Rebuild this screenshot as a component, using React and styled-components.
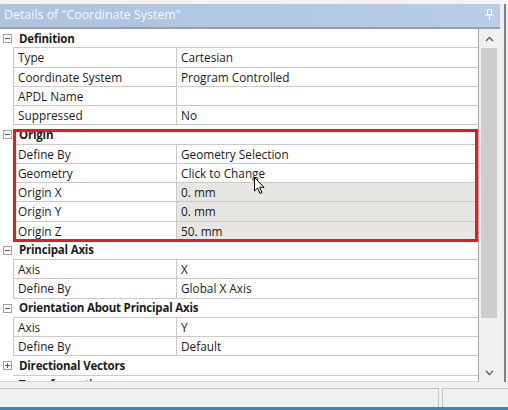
import React from "react";
import styled, { createGlobalStyle } from "styled-components";

const Global = createGlobalStyle`
  html, body { margin: 0; padding: 0; background: #f0f0f0; }
  body { font-family: "Open Sans", "Noto Sans", sans-serif; }
  * { box-sizing: border-box; }
`;

const Screen = styled.div`
  width: 508px;
  height: 410px;
  display: flex;
  flex-direction: column;
  background: #f0f0f0;
  overflow: hidden;
  position: relative;
`;

const TopStrip = styled.div`
  height: 4px;
  background: #f3f3f3;
  flex: none;
`;

const Main = styled.div`
  height: 378px;
  display: flex;
  flex: none;
`;

const Panel = styled.div`
  width: 500px;
  display: flex;
  flex-direction: column;
`;

const TitleBar = styled.div`
  height: 25px;
  flex: none;
  display: flex;
  align-items: center;
  justify-content: space-between;
  padding: 0 6px 2px 4px;
  background: linear-gradient(to right, #aec3de, #b3c8e2 60%, #b9cde6);
  border-bottom: 2px solid #9a9ea4;
  color: #f7f9fc;
  font-size: 12.4px;
  white-space: nowrap;
`;

const Body = styled.div`
  flex: 1;
  display: flex;
  min-height: 0;
`;

const Grid = styled.div`
  width: 478px;
  height: 100%;
  overflow: hidden;
  background: #ffffff;
  position: relative;
  border-bottom: 1px solid #d6d6d6;
`;

const Row = styled.div`
  height: 19.25px;
  display: flex;
  font-size: 11.8px;
  color: #1b1b1b;
`;

const Gutter = styled.div`
  width: 13px;
  flex: none;
  display: flex;
  align-items: center;
  padding-left: 3px;
  background: #fff;
`;

const ToggleBox = styled.div`
  width: 9px;
  height: 9px;
  border: 1px solid #a3a3a3;
  position: relative;
  background: #fff;
  &::before {
    content: "";
    position: absolute;
    left: 1px;
    right: 1px;
    top: 3px;
    height: 1px;
    background: #5a5a5a;
  }
  &::after {
    content: "";
    display: ${(p) => (p.$plus ? "block" : "none")};
    position: absolute;
    top: 1px;
    bottom: 1px;
    left: 3px;
    width: 1px;
    background: #5a5a5a;
  }
`;

const HeaderCell = styled.div`
  flex: 1;
  display: flex;
  align-items: center;
  padding-left: 6px;
  font-weight: 700;
  font-size: 11.5px;
  letter-spacing: -0.2px;
  border-bottom: 1px solid #cacaca;
  white-space: nowrap;
`;

const Cell = styled.div`
  display: flex;
  align-items: center;
  padding-left: 4px;
  border-left: 1px solid #cacaca;
  border-bottom: 1px solid #cacaca;
  white-space: nowrap;
  background: ${(p) => (p.$gray ? "#e8e6e3" : "#ffffff")};
  width: ${(p) => p.$w || "auto"};
  flex: ${(p) => (p.$w ? "none" : "1")};
`;

const Scrollbar = styled.div`
  width: 22px;
  flex: none;
  display: flex;
  flex-direction: column;
  background: #f0f0f0;
  border-left: 1px solid #a9a9a9;
  padding: 0 3px 0 2px;
`;

const ArrowBtn = styled.div`
  height: 19px;
  flex: none;
  display: flex;
  align-items: center;
  justify-content: center;
`;

const Thumb = styled.div`
  height: 270px;
  flex: none;
  background: #cdcdcd;
`;

const Track = styled.div`
  flex: 1;
`;

const RightStrip = styled.div`
  width: 8px;
  flex: none;
  display: flex;
  flex-direction: column;
  padding-left: 4px;
  background: #eeeeee;
`;

const DarkLine = styled.div`
  width: 2px;
  flex: 1;
  background: #7f7f7f;
`;

const Gap = styled.div`
  height: 6px;
  flex: none;
  background: #f0f0f0;
`;

const StatusBar = styled.div`
  height: 19px;
  flex: none;
  display: flex;
  gap: 3px;
  background: #f0f0f0;
`;

const StatusPanel = styled.div`
  width: ${(p) => p.$w};
  flex: ${(p) => (p.$grow ? 1 : "none")};
  border-top: 1px solid #c5c5c5;
  border-left: ${(p) => (p.$left ? "1px solid #c5c5c5" : "none")};
  border-right: ${(p) => (p.$right ? "1px solid #c5c5c5" : "none")};
`;

const BlueLine = styled.div`
  height: 3px;
  flex: none;
  background: #1c8fd1;
`;

const Highlight = styled.div`
  position: absolute;
  left: 13px;
  top: 100px;
  width: 465px;
  height: 112.5px;
  border: 3px solid #ff1212;
  pointer-events: none;
`;

const Cursor = styled.svg`
  position: absolute;
  left: 254px;
  top: 177px;
`;

const sections = [
  {
    title: "Definition",
    rows: [
      ["Type", "Cartesian"],
      ["Coordinate System", "Program Controlled"],
      ["APDL Name", ""],
      ["Suppressed", "No"],
    ],
  },
  {
    title: "Origin",
    rows: [
      ["Define By", "Geometry Selection"],
      ["Geometry", "Click to Change"],
      ["Origin X", "0. mm", true],
      ["Origin Y", "0. mm", true],
      ["Origin Z", "50. mm", true],
    ],
  },
  {
    title: "Principal Axis",
    rows: [
      ["Axis", "X"],
      ["Define By", "Global X Axis"],
    ],
  },
  {
    title: "Orientation About Principal Axis",
    rows: [
      ["Axis", "Y"],
      ["Define By", "Default"],
    ],
  },
  { title: "Directional Vectors", collapsed: true, rows: [] },
  { title: "Transformations", rows: [] },
];

function Pin() {
  return (
    <svg width="9" height="11" viewBox="0 0 9 11">
      <rect x="2.5" y="0.5" width="4" height="5" fill="none" stroke="#ffffff" strokeWidth="1" />
      <line x1="0.5" y1="6" x2="8.5" y2="6" stroke="#ffffff" strokeWidth="1.2" />
      <line x1="4.5" y1="6" x2="4.5" y2="11" stroke="#ffffff" strokeWidth="1.2" />
    </svg>
  );
}

function Caret({ up }) {
  return (
    <svg width="9" height="6" viewBox="0 0 9 6">
      <polyline
        points={up ? "1,5 4.5,1.5 8,5" : "1,1 4.5,4.5 8,1"}
        fill="none"
        stroke="#606060"
        strokeWidth="1.4"
      />
    </svg>
  );
}

export default function App() {
  return (
    <>
      <Global />
      <Screen>
        <TopStrip />
        <Main>
          <Panel>
            <TitleBar>
              <span>Details of "Coordinate System"</span>
              <Pin />
            </TitleBar>
            <Body>
              <Grid>
                {sections.map((s) => (
                  <React.Fragment key={s.title}>
                    <Row>
                      <Gutter>
                        <ToggleBox $plus={s.collapsed} />
                      </Gutter>
                      <HeaderCell>{s.title}</HeaderCell>
                    </Row>
                    {s.rows.map(([label, value, gray], i) => (
                      <Row key={s.title + i}>
                        <Gutter />
                        <Cell $w="163px">{label}</Cell>
                        <Cell $gray={gray}>{value}</Cell>
                      </Row>
                    ))}
                  </React.Fragment>
                ))}
                <Highlight />
              </Grid>
              <Scrollbar>
                <ArrowBtn>
                  <Caret up />
                </ArrowBtn>
                <Thumb />
                <Track />
                <ArrowBtn>
                  <Caret />
                </ArrowBtn>
              </Scrollbar>
            </Body>
          </Panel>
          <RightStrip>
            <DarkLine />
          </RightStrip>
        </Main>
        <Gap />
        <StatusBar>
          <StatusPanel $w="439px" $right />
          <StatusPanel $grow $left />
        </StatusBar>
        <BlueLine />
        <Cursor width="12" height="18" viewBox="0 0 12 18">
          <path
            d="M0.5 0.5 L0.5 14 L3.6 11 L6 16.5 L8 15.6 L5.7 10.3 L10 10.3 Z"
            fill="#ffffff"
            stroke="#000000"
            strokeWidth="1"
            strokeLinejoin="round"
          />
        </Cursor>
      </Screen>
    </>
  );
}
